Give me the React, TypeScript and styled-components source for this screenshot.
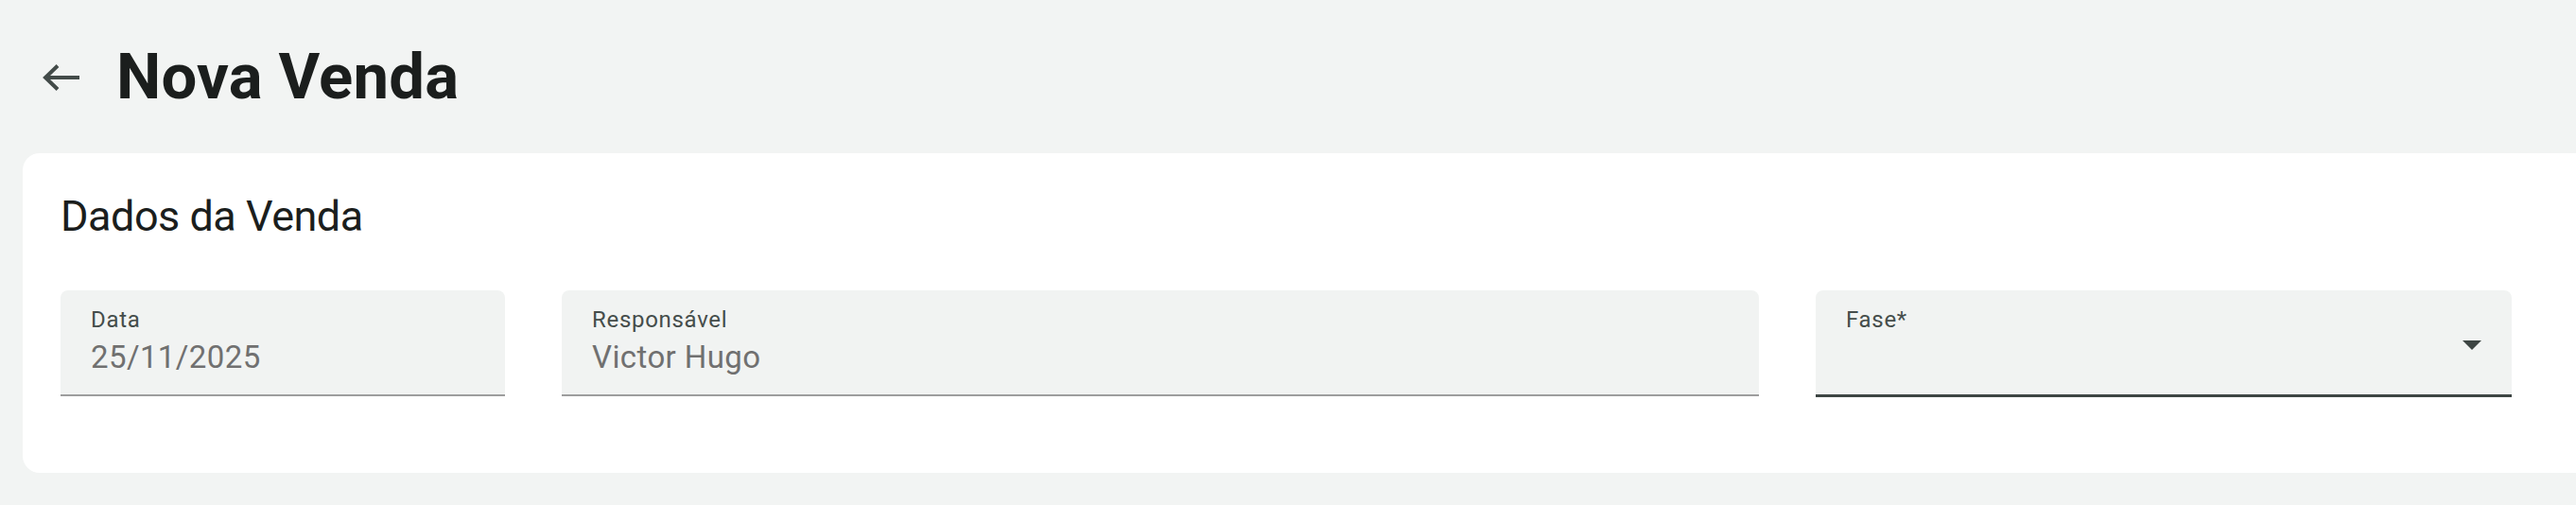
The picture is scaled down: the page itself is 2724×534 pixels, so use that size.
import styled, { createGlobalStyle } from 'styled-components';

const GlobalStyle = createGlobalStyle`
  * {
    box-sizing: border-box;
  }
  html,
  body {
    margin: 0;
    padding: 0;
    background: #f2f4f3;
  }
  body {
    font-family: Roboto, 'Noto Sans', 'Liberation Sans', sans-serif;
    overflow: hidden;
  }
`;

interface FieldProps {
  label: string;
  value?: string;
  select?: boolean;
}

const Field = (props: FieldProps) => {
  const { label, value, select } = props;
  return (
    <FieldBox $select={select}>
      <FieldBody>
        <FieldLabel>{label}</FieldLabel>
        <FieldValue>{value}</FieldValue>
      </FieldBody>
      {select && (
        <DropIcon viewBox="0 0 20 10" aria-hidden>
          <path d="M0 0h20L10 10z" fill="currentColor" />
        </DropIcon>
      )}
    </FieldBox>
  );
};

const App = () => {
  return (
    <>
      <GlobalStyle />
      <Page>
        <Header>
          <BackIcon viewBox="0 0 40 28" aria-hidden>
            <path d="M40 14H4M17 1.5 4 14l13 12.5" />
          </BackIcon>
          <Title>Nova Venda</Title>
        </Header>
        <Card>
          <SectionTitle>Dados da Venda</SectionTitle>
          <FieldsRow>
            <Field label="Data" value="25/11/2025" />
            <Field label="Responsável" value="Victor Hugo" />
            <Field label="Fase*" select />
          </FieldsRow>
        </Card>
      </Page>
    </>
  );
};

export default App;

const Page = styled.div`
  min-height: 534px;
  padding: 42px 0 0 24px;
  overflow: hidden;
`;

const Header = styled.div`
  display: flex;
  align-items: center;
  gap: 39px;
  height: 79px;
  padding-left: 20px;
`;

const BackIcon = styled.svg`
  width: 40px;
  height: 28px;
  flex-shrink: 0;
  fill: none;
  stroke: #434b49;
  stroke-width: 4;
  stroke-linejoin: miter;
`;

const Title = styled.h1`
  margin: 0;
  font-size: 67px;
  font-weight: 700;
  line-height: 79px;
  letter-spacing: 0.2px;
  color: #1b1e1d;
`;

const Card = styled.section`
  margin-top: 41px;
  margin-right: -40px;
  height: 338px;
  padding: 40px 40px 0;
  background: #ffffff;
  border-radius: 18px;
`;

const SectionTitle = styled.h2`
  margin: 0;
  font-size: 45px;
  font-weight: 400;
  line-height: 54px;
  letter-spacing: -0.5px;
  color: #1b1e1d;
`;

const FieldsRow = styled.div`
  display: grid;
  grid-template-columns: 470px 1266px 736px;
  column-gap: 60px;
  align-items: start;
  margin-top: 51px;
`;

const FieldBox = styled.div<{ $select?: boolean }>`
  display: flex;
  height: ${({ $select }) => ($select ? '113px' : '112px')};
  padding: 14px 32px 0;
  background: #f1f3f2;
  border-radius: 8px 8px 0 0;
  border-bottom: ${({ $select }) => ($select ? '3px solid #3d4543' : '2px solid #9d9d9d')};
`;

const FieldBody = styled.div`
  display: flex;
  flex-direction: column;
  flex: 1;
  min-width: 0;
`;

const FieldLabel = styled.span`
  font-size: 24px;
  line-height: 34px;
  letter-spacing: 0.7px;
  color: #454d4b;
`;

const FieldValue = styled.span`
  min-height: 46px;
  font-size: 33px;
  line-height: 46px;
  letter-spacing: 0.4px;
  color: #707070;
`;

const DropIcon = styled.svg`
  align-self: center;
  flex-shrink: 0;
  width: 20px;
  height: 10px;
  margin-bottom: 8px;
  color: #3d4543;
`;
